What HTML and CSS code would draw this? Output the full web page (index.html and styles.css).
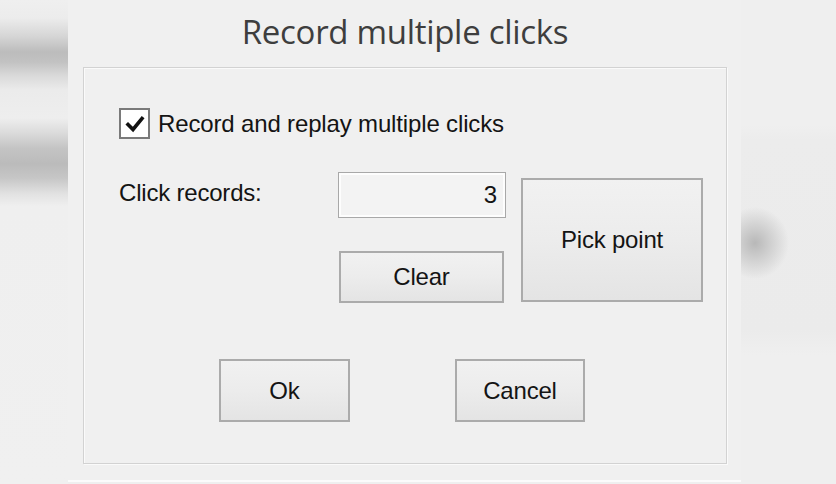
FILE: index.html
```html
<!DOCTYPE html>
<html lang="en">
<head>
<meta charset="utf-8">
<title>Record multiple clicks</title>
<link rel="stylesheet" href="styles.css">
</head>
<body>
<div class="screen">
  <div class="bg-left"></div>
  <div class="window">
    <h1 class="title">Record multiple clicks</h1>
    <div class="group">
      <label class="check-row">
        <span class="checkbox">
          <svg width="20" height="18" viewBox="0 0 20 18"><path d="M3 9.5 L8 14.5 L17 3.5" fill="none" stroke="#111" stroke-width="3.6" stroke-linecap="square"/></svg>
        </span>
        <span class="check-label">Record and replay multiple clicks</span>
      </label>
      <div class="fields">
        <span class="field-label">Click records:</span>
        <div class="textbox">3</div>
        <button class="btn btn-pick">Pick point</button>
        <button class="btn btn-clear">Clear</button>
      </div>
      <div class="actions">
        <button class="btn btn-ok">Ok</button>
        <button class="btn btn-cancel">Cancel</button>
      </div>
    </div>
  </div>
  <div class="bg-right"></div>
</div>
</body>
</html>
```
FILE: styles.css
```css
* { box-sizing: border-box; }
html, body { margin: 0; padding: 0; }
body {
  background: #efefef;
  width: 836px;
  height: 484px;
  overflow: hidden;
  font-family: "Liberation Sans", Arial, sans-serif;
}
.screen {
  display: flex;
  height: 484px;
}
.bg-left {
  width: 68px;
  flex: none;
  background:
    linear-gradient(180deg,
      #efefef 0px, #ececec 18px, #d6d6d6 36px, #bcbcbc 52px, #c2c2c2 62px, #dadada 76px, #ebebeb 90px,
      #eeeeee 118px, #dcdcdc 132px, #c4c4c4 148px, #bbbbbb 164px, #c6c6c6 178px, #e2e2e2 194px, #efefef 206px,
      #f0f0f0 100%);
}
.window {
  width: 673px;
  flex: none;
  height: 482px;
  background: #f0f0f0;
  border-bottom: 2px solid #fbfbfb;
  padding: 0 14px 16px 15px;
  display: flex;
  flex-direction: column;
}
.bg-right {
  flex: 1;
  background:
    radial-gradient(ellipse 34px 36px at 14px 243px, #b8b8b8 0%, #cdcdcd 40%, rgba(232,232,232,0) 100%),
    linear-gradient(180deg, #efefef 0, #efefef 125px, #ececec 140px, #ebebeb 330px, #efefef 355px, #efefef 100%);
}
.title {
  margin: 0;
  height: 67px;
  padding-top: 12px;
  text-align: center;
  font-family: "Open Sans", "Noto Sans", sans-serif;
  font-weight: 400;
  font-size: 33px;
  line-height: 40px;
  letter-spacing: -0.3px;
  color: #3e3e3e;
}
.group {
  flex: 1;
  border: 1px solid #d2d2d2;
  box-shadow: inset 1px 1px 0 #fafafa, 1px 1px 0 #fafafa;
  padding: 40px 0 0 35px;
  display: flex;
  flex-direction: column;
}
.check-row {
  display: flex;
  align-items: center;
  height: 31px;
  margin-left: 0;
}
.checkbox {
  width: 31px;
  height: 31px;
  border: 2px solid #7a7a7a;
  background: #fff;
  display: flex;
  align-items: center;
  justify-content: center;
  flex: none;
}
.checkbox svg { display: block; }
.check-label {
  margin-left: 8px;
  font-size: 24px;
  line-height: 28px;
  letter-spacing: -0.15px;
  color: #141414;
}
.fields {
  margin-top: 33px;
  display: grid;
  grid-template-columns: 204px 168px 182px;
  grid-template-rows: 46px 52px;
  column-gap: 15px;
  row-gap: 33px;
}
.field-label {
  grid-column: 1;
  grid-row: 1;
  margin-top: 7px;
  font-size: 24px;
  line-height: 28px;
  letter-spacing: -0.2px;
  color: #141414;
}
.textbox {
  grid-column: 2;
  grid-row: 1;
  border: 1px solid #a8a8a8;
  box-shadow: inset 0 0 0 2px #fdfdfd;
  background: #f3f3f3;
  text-align: right;
  padding-right: 8px;
  font-size: 24px;
  line-height: 44px;
  color: #141414;
}
.btn {
  font-family: "Liberation Sans", Arial, sans-serif;
  font-size: 24px;
  letter-spacing: -0.2px;
  color: #141414;
  border: 2px solid #ababab;
  background: linear-gradient(180deg, #f1f1f1 0%, #ececec 50%, #e4e4e4 100%);
  padding: 0;
  margin: 0;
}
.btn-pick {
  grid-column: 3;
  grid-row: 1 / span 2;
  margin-top: 6px;
  height: 124px;
}
.btn-clear {
  grid-column: 2;
  grid-row: 2;
  margin-left: 1px;
  width: 165px;
  height: 52px;
}
.actions {
  margin-top: 56px;
  margin-left: -35px;
  padding-right: 6px;
  display: flex;
  justify-content: center;
  gap: 105px;
}
.btn-ok { width: 131px; height: 63px; }
.btn-cancel { width: 130px; height: 63px; }
```
